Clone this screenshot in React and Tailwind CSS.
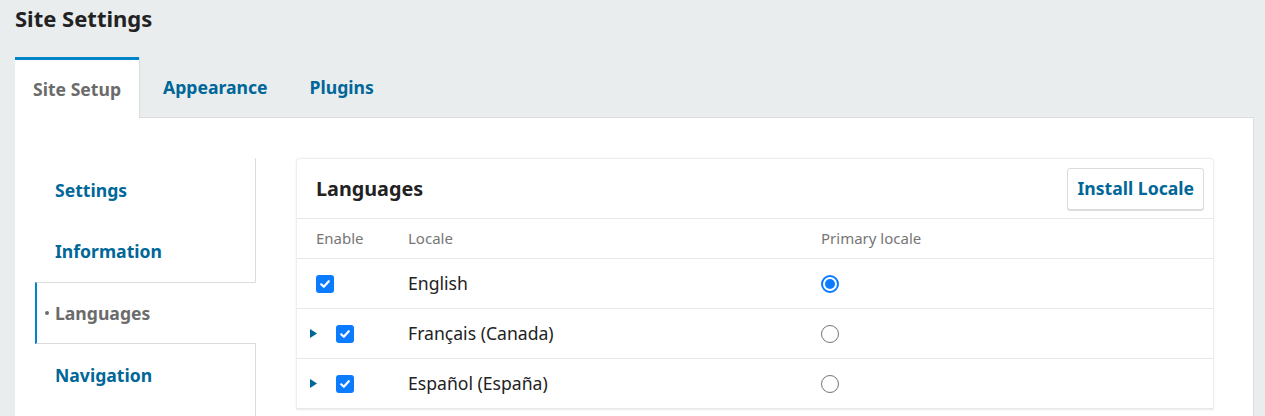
import React from 'react';

const navItems = [
  { label: 'Settings' },
  { label: 'Information' },
  { label: 'Languages', active: true },
  { label: 'Navigation' },
];

const locales = [
  { name: 'English', primary: true, expandable: false },
  { name: 'Français (Canada)', primary: false, expandable: true },
  { name: 'Español (España)', primary: false, expandable: true },
];

function Checkbox() {
  return (
    <span className="inline-flex w-[18px] h-[18px] rounded-[3px] bg-[#0b7bff] items-center justify-center">
      <svg width="12" height="12" viewBox="0 0 12 12" fill="none">
        <path d="M2.2 6.3 L4.8 8.8 L9.8 3.2" stroke="white" strokeWidth="2.2" strokeLinecap="round" strokeLinejoin="round" />
      </svg>
    </span>
  );
}

function Radio({ checked }) {
  return checked ? (
    <span className="inline-flex w-[18px] h-[18px] rounded-full border-2 border-[#0b7bff] items-center justify-center">
      <span className="w-[10px] h-[10px] rounded-full bg-[#0b7bff]" />
    </span>
  ) : (
    <span className="inline-block w-[18px] h-[18px] rounded-full border border-[#767676]" />
  );
}

export default function App() {
  return (
    <div className="w-[1265px] h-[416px] overflow-hidden bg-[#eaedee] font-['Noto_Sans',sans-serif] text-[#222] flex flex-col">
      <h1 className="px-[15px] pt-[2px] h-[57px] shrink-0 text-[22px] font-bold leading-[32px]">Site Settings</h1>

      {/* tabs */}
      <div className="flex pl-[15px] h-[61px] shrink-0">
        <div className="w-[124px] bg-white border-t-[3px] border-[#0085c8] flex items-center justify-center text-[17.6px] font-bold text-[#6b6b6b] pt-[1px]">
          Site Setup
        </div>
        <div className="flex-1 h-full flex items-center border-b border-[#dcdcdc] mr-[11px] border-l border-l-[#dcdcdc] pt-[1px]">
          <span className="ml-[23px] text-[17.6px] font-bold text-[#006798]">Appearance</span>
          <span className="ml-[42px] text-[17.6px] font-bold text-[#006798]">Plugins</span>
        </div>
      </div>

      {/* panel */}
      <div className="flex-1 ml-[15px] mr-[11px] bg-white border-r border-[#dcdcdc] flex pt-[40px] pl-[20px]">
        <nav className="w-[221px] shrink-0 flex flex-col">
          {navItems.map((item, i) =>
            item.active ? (
              <div key={item.label} className="h-[62px] shrink-0 flex items-center border-l-[2px] border-[#0085c8] border-t border-b border-t-[#dcdcdc] border-b-[#dcdcdc] text-[17.6px] font-bold text-[#6b6b6b]">
                <span className="ml-[8px] mr-[6px] w-[4px] h-[4px] rounded-full bg-[#6b6b6b]" />
                {item.label}
              </div>
            ) : (
              <div key={item.label} className={`h-[62px] shrink-0 flex items-center border-r border-[#dcdcdc] pl-[20px] text-[17.6px] font-bold text-[#006798] ${i === 0 ? 'pt-[2px]' : ''}`}>
                {item.label}
              </div>
            )
          )}
          <div className="flex-1 border-r border-[#dcdcdc]" />
        </nav>

        <div className="ml-[40px] w-[918px] shrink-0 border border-[#eee] rounded-t-[4px] shadow-[0_0_2px_rgba(0,0,0,0.08)] self-start">
          <div className="h-[60px] flex items-center justify-between pl-[19px] pr-[9px] border-b border-[#e8e8e8]">
            <h2 className="text-[19.8px] font-bold text-[#222]">Languages</h2>
            <button className="h-[42px] px-[9px] border border-[#dcdcdc] rounded-[3px] shadow-[0_1px_0_#dcdcdc] text-[17.6px] font-bold text-[#006798] bg-white">
              Install Locale
            </button>
          </div>
          <div className="h-[40px] flex items-center border-b border-[#e8e8e8] text-[15px] text-[#767676]">
            <span className="w-[111px] pl-[19px]">Enable</span>
            <span className="w-[413px]">Locale</span>
            <span>Primary locale</span>
          </div>
          {locales.map((l) => (
            <div key={l.name} className="h-[50px] flex items-center border-b border-[#e8e8e8]">
              <div className="w-[111px] flex items-center">
                {l.expandable ? (
                  <>
                    <svg className="ml-[13px]" width="7" height="9" viewBox="0 0 7 9">
                      <path d="M0 0 L7 4.5 L0 9 Z" fill="#006798" />
                    </svg>
                    <span className="ml-[19px] flex"><Checkbox /></span>
                  </>
                ) : (
                  <span className="ml-[19px] flex"><Checkbox /></span>
                )}
              </div>
              <span className="w-[413px] text-[17.6px] text-[#222]">{l.name}</span>
              <span className="flex"><Radio checked={l.primary} /></span>
            </div>
          ))}
        </div>
      </div>
    </div>
  );
}
